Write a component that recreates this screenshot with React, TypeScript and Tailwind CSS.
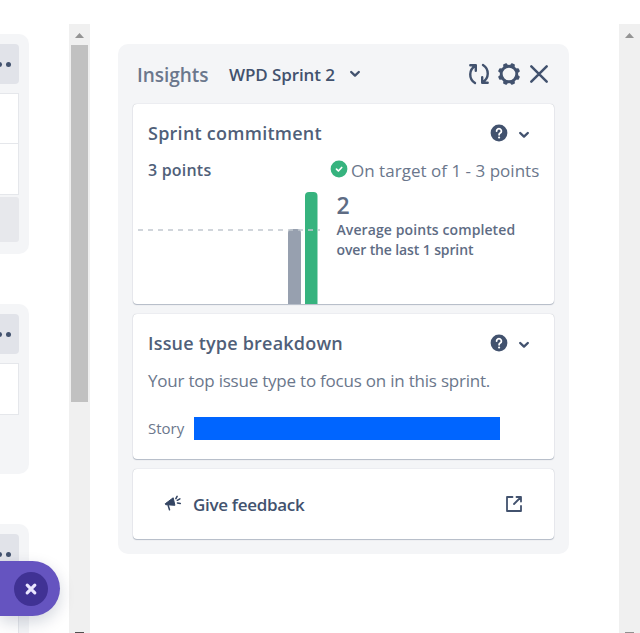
import React from "react";

const card = "bg-white rounded-[4px] shadow-[0_1px_1px_rgba(9,30,66,0.25),0_0_1px_rgba(9,30,66,0.31)]";

function Chevron() {
  return (
    <svg className="block shrink-0" width="12" height="8" viewBox="0 0 12 8" fill="none" stroke="#42526e" strokeWidth="2.4" strokeLinecap="round" strokeLinejoin="round">
      <path d="M2.2 2l3.800 3.600L9.800 2" />
    </svg>
  );
}

function Help() {
  return (
    <svg className="block shrink-0" width="18" height="18" viewBox="0 0 18 18" fill="none">
      <circle cx="9" cy="9" r="8.4" fill="#42526e" />
      <path d="M6.6 7.1a2.4 2.4 0 1 1 3.7 2c-.8.5-1.2.8-1.2 1.700" stroke="#fff" strokeWidth="1.800" strokeLinecap="round" />
      <circle cx="9.100" cy="13.500" r="1.100" fill="#fff" />
    </svg>
  );
}

function Refresh() {
  return (
    <svg className="block shrink-0" width="22" height="22" viewBox="0 0 22 22" fill="none" stroke="#42526e" strokeWidth="2.400" strokeLinecap="round" strokeLinejoin="round">
      <path d="M2.300 2.200h5.500v5.500M7.400 2.700C.8 6.500.4 15.800 7 20" />
      <path d="M19.700 19.800h-5.500v-5.500M14.600 19.300C21.200 15.500 21.600 6.200 15 2" />
    </svg>
  );
}

function Gear() {
  const teeth = [22.5, 67.5, 112.5, 157.5, 202.5, 247.5, 292.5, 337.5];
  return (
    <svg className="block shrink-0" width="24" height="24" viewBox="0 0 24 24">
      <circle cx="12" cy="12" r="7.800" fill="none" stroke="#42526e" strokeWidth="2.900" />
      {teeth.map((a) => (
        <path key={a} d="M9.400 3.800L10 1.500q.2-.6.800-.6h2.400q.6 0 .8.600l.6 2.300z" fill="#42526e" transform={`rotate(${a} 12 12)`} />
      ))}
    </svg>
  );
}

function Close() {
  return (
    <svg className="block shrink-0" width="20" height="20" viewBox="0 0 20 20" stroke="#42526e" strokeWidth="2.500" strokeLinecap="round">
      <path d="M2.300 2.300l15.400 15.400M17.700 2.300L2.300 17.700" />
    </svg>
  );
}

function MoreButton() {
  return (
    <div className="flex h-10 w-[19px] shrink-0 items-center justify-end gap-[3.500px] overflow-hidden rounded-r-[4px] bg-[#e1e3e9] pr-[8.500px]">
      <span className="size-[5px] shrink-0 rounded-full bg-[#42526e]" />
      <span className="size-[5px] shrink-0 rounded-full bg-[#42526e]" />
    </div>
  );
}

function Scrollbar({ thumb }: { thumb?: boolean }) {
  return (
    <div className="mt-6 flex h-[609px] w-[21px] shrink-0 flex-col items-center bg-[#f0f0f0]">
      <svg className="block shrink-0" width="21" height="21" viewBox="0 0 21 21">
        <path d="M6 14l4.500-5 4.500 5z" fill="#949494" />
      </svg>
      {thumb && <div className="h-[357px] w-[17px] bg-[#c1c1c1]" />}
      <div className={thumb ? "mt-auto h-px w-[9px] bg-[#505050]" : "mt-auto h-px w-[9px] bg-[#909090]"} />
    </div>
  );
}

function Backlog() {
  return (
    <div className="flex h-[633px] w-[69px] shrink-0 flex-col overflow-hidden pt-[34px]">
      <div className="h-[220px] w-[29px] shrink-0 rounded-r-[10px] bg-[#f4f5f7] pt-[10px]">
        <MoreButton />
        <div className="mt-[9px] h-[51px] w-[19px] border-y border-r border-[#e5e7eb] bg-white" />
        <div className="h-[51px] w-[19px] border-r border-b border-[#e5e7eb] bg-white" />
        <div className="mt-[2px] h-[45px] w-[19px] rounded-r-[3px] bg-[#e7e8ec]" />
      </div>
      <div className="mt-[50px] h-[170px] w-[29px] shrink-0 rounded-r-[10px] bg-[#f4f5f7] pt-[10px]">
        <MoreButton />
        <div className="mt-[9px] h-[52px] w-[19px] border-y border-r border-[#e5e7eb] bg-white" />
      </div>
      <div className="mt-[50px] h-[150px] w-[29px] shrink-0 rounded-tr-[10px] bg-[#f4f5f7] pt-[10px]">
        <MoreButton />
        <div className="mt-[9px] h-[60px] w-[19px] border-y border-r border-[#e5e7eb] bg-white" />
      </div>
    </div>
  );
}

function CardHeading({ title, spacing }: { title: string; spacing: string }) {
  return (
    <div className="flex h-[30px] items-center">
      <h2 className={`text-[18px] leading-[30px] font-semibold text-[#505f79] ${spacing}`}>{title}</h2>
      <div className="mr-[24px] ml-auto flex items-center gap-[10px]">
        <Help />
        <div className="pt-[3px]"><Chevron /></div>
      </div>
    </div>
  );
}

function Insights() {
  return (
    <main className="mt-[44px] ml-[28px] h-[510px] w-[451px] shrink-0 rounded-[10px] bg-[#f4f5f7] px-[15px]">
      <header className="flex h-[60px] items-center pl-[4px]">
        <h1 className="w-[92px] shrink-0 pt-[2px] text-[19px] font-semibold tracking-[-0.050px] text-[#6b778c]">Insights</h1>
        <span className="w-[120px] shrink-0 pt-px text-[17px] font-semibold tracking-[-0.1px] text-[#42526e]">WPD Sprint 2</span>
        <Chevron />
        <div className="mr-[5px] ml-auto flex items-center">
          <Refresh />
          <div className="mr-[8px] ml-[7px]"><Gear /></div>
          <Close />
        </div>
      </header>

      <section className={`h-[200px] pt-[14px] pl-[15px] ${card}`}>
        <CardHeading title="Sprint commitment" spacing="tracking-[0.250px]" />
        <div className="mt-[9px] flex h-[26px] items-center">
          <span className="w-[182px] shrink-0 text-[16px] leading-[24px] font-semibold tracking-[0.200px] text-[#505f79]">3 points</span>
          <svg className="mb-[2px] block shrink-0" width="18" height="18" viewBox="0 0 18 18" fill="none">
            <circle cx="9" cy="9" r="8.400" fill="#36b37e" />
            <path d="M6.500 9.100l1.900 1.900 3.300-3.500" stroke="#fff" strokeWidth="1.700" strokeLinecap="round" strokeLinejoin="round" />
          </svg>
          <span className="ml-[3px] pt-[1px] text-[17px] leading-[24px] font-normal tracking-[0.020px] whitespace-nowrap text-[#6b778c]">On target of 1 - 3 points</span>
        </div>
        <div className="-mt-[3px] -ml-[10px] flex h-[124px]">
          <svg className="block shrink-0" width="198.500" height="124" viewBox="0 0 198.500 124">
            <path d="M150 124V53q0-4 4-4h5q4 0 4 4v71z" fill="#97a0af" />
            <path d="M167 124V16q0-4 4-4h4.500q4 0 4 4v108z" fill="#36b37e" />
            <path d="M0 50H182" stroke="#c1c7d0" strokeWidth="1.500" strokeDasharray="5 5" />
          </svg>
          <div className="pt-[11px] text-[#5e6c84]">
            <div className="text-[23px] leading-[28px] font-semibold">2</div>
            <div className="pt-px text-[14px] leading-[20px] font-semibold whitespace-nowrap">
              <div className="tracking-[0.100px]">Average points completed</div>
              <div className="tracking-[-0.120px]">over the last 1 sprint</div>
            </div>
          </div>
        </div>
      </section>

      <section className={`mt-[10px] h-[145px] pt-[14px] pl-[15px] ${card}`}>
        <CardHeading title="Issue type breakdown" spacing="tracking-[0.200px]" />
        <p className="mt-[11px] text-[17px] leading-[24px] font-normal tracking-[-0.220px] whitespace-nowrap text-[#6b778c]">Your top issue type to focus on in this sprint.</p>
        <div className="mt-[23px] flex h-[24px] items-center">
          <span className="w-[46.500px] shrink-0 text-[15px] leading-[22px] text-[#6b778c]">Story</span>
          <div className="-ml-[0.250px] h-[23px] w-[305.500px] bg-[#0065ff]" />
        </div>
      </section>

      <section className={`mt-[10px] flex h-[70px] items-center pl-[31px] ${card}`}>
        <svg className="mb-[3px] block shrink-0" width="18" height="18" viewBox="0 0 18 18" fill="#344563" stroke="#344563">
          <path d="M1.200 9.800L9.200 3.800l1.700 7.500L1.700 10.700z" strokeWidth="1" strokeLinejoin="round" />
          <path d="M4.200 11.500l1.300 4.200M11.900 4.700l1.200-2.400M13.300 6.300l2.600-1.500M13.500 8.900l2.800.5" fill="none" strokeWidth="1.500" strokeLinecap="round" />
        </svg>
        <span className="ml-[11px] pt-px text-[17px] font-semibold tracking-[-0.300px] text-[#42526e]">Give feedback</span>
        <svg className="mr-[31px] ml-auto block" width="18" height="18" viewBox="0 0 18 18" fill="none" stroke="#42526e" strokeWidth="1.800" strokeLinecap="round" strokeLinejoin="round">
          <path d="M7.500 2H2v14h14V11M11.500 2h4.500v4.500M15.500 2.500L9 9" />
        </svg>
      </section>
    </main>
  );
}

export default function App() {
  return (
    <div className="relative flex h-[633px] w-[640px] overflow-hidden bg-white font-['Open_Sans','Noto_Sans',sans-serif]">
      <Backlog />
      <Scrollbar thumb />
      <div className="flex w-[529px] shrink-0"><Insights /></div>
      <Scrollbar />
      <div className="absolute top-[561px] left-0 flex h-[55px] w-[60px] items-center justify-end rounded-r-full bg-[#6554c0] pr-[12px] shadow-[0_6px_16px_rgba(9,30,66,0.18)]">
        <div className="flex size-[34px] items-center justify-center rounded-full bg-[#403294]">
          <svg className="block" width="14" height="14" viewBox="0 0 14 14" stroke="#eae6ff" strokeWidth="3.200" strokeLinecap="round">
            <path d="M3.200 3.200l7.600 7.600M10.800 3.200l-7.600 7.600" />
          </svg>
        </div>
      </div>
    </div>
  );
}
